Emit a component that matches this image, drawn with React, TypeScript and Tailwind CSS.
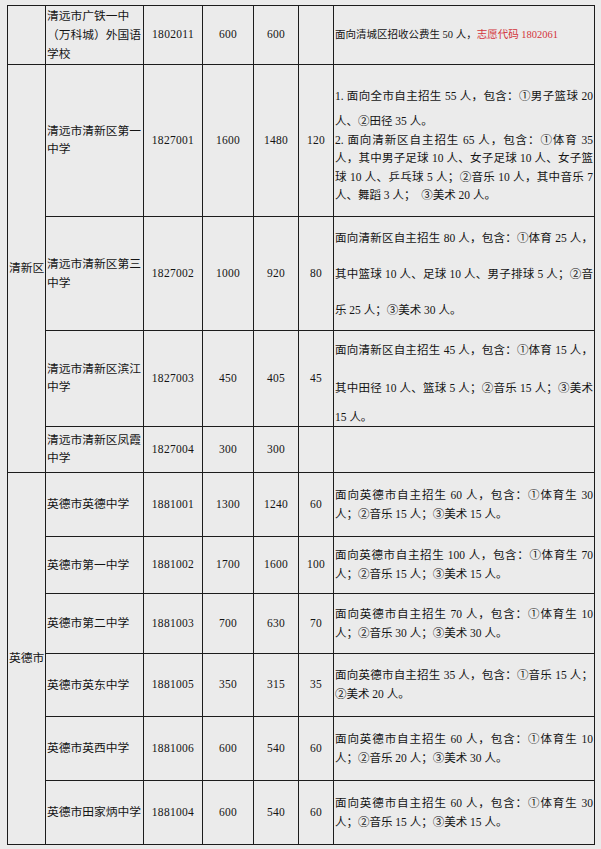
type Row = {
  h: string;
  region?: { label: string; span: number } | 'empty';
  name: string[];
  nameLeading: string;
  code: string;
  plan: string;
  quota: string;
  self: string;
  notes: React.ReactNode;
};

const J = 'text-justify [text-align-last:justify]';

function Two({ a, b }: { a: string; b: string }) {
  return (
    <div className="leading-[19px]">
      <div className={J}>{a}</div>
      <div>{b}</div>
    </div>
  );
}

const rows: Row[] = [
  {
    h: 'h-[59px]',
    region: 'empty',
    name: ['清远市广铁一中', '（万科城）外国语', '学校'],
    nameLeading: 'leading-[19px]',
    code: '1802011',
    plan: '600',
    quota: '600',
    self: '',
    notes: (
      <div className="text-[10.5px] leading-[18px] whitespace-nowrap">
        面向清城区招收公费生 50 人，<span className="text-[#d3343c]">志愿代码 1802061</span>
      </div>
    ),
  },
  {
    h: 'h-[152px]',
    region: { label: '清新区', span: 4 },
    name: ['清远市清新区第一', '中学'],
    nameLeading: 'leading-[18px]',
    code: '1827001',
    plan: '1600',
    quota: '1480',
    self: '120',
    notes: (
      <div className="pt-[16px]">
        <div className={`${J} leading-[31px]`}>1. 面向全市自主招生 55 人，包含：①男子篮球 20</div>
        <div className="leading-[18.5px]">人、②田径 35 人。</div>
        <div className={`${J} leading-[18.5px]`}>2. 面向清新区自主招生 65 人，包含：①体育 35</div>
        <div className={`${J} leading-[18.5px]`}>人，其中男子足球 10 人、女子足球 10 人、女子篮</div>
        <div className={`${J} leading-[18.5px]`}>球 10 人、乒乓球 5 人；②音乐 10 人，其中音乐 7</div>
        <div className="leading-[18.5px]">人、舞蹈 3 人；&nbsp;&nbsp;③美术 20 人。</div>
      </div>
    ),
  },
  {
    h: 'h-[114px]',
    name: ['清远市清新区第三', '中学'],
    nameLeading: 'leading-[19px]',
    code: '1827002',
    plan: '1000',
    quota: '920',
    self: '80',
    notes: (
      <div className="leading-[36px]">
        <div className={J}>面向清新区自主招生 80 人，包含：①体育 25 人，</div>
        <div className={J}>其中篮球 10 人、足球 10 人、男子排球 5 人；②音</div>
        <div>乐 25 人；③美术 30 人。</div>
      </div>
    ),
  },
  {
    h: 'h-[96px]',
    name: ['清远市清新区滨江', '中学'],
    nameLeading: 'leading-[18px]',
    code: '1827003',
    plan: '450',
    quota: '405',
    self: '45',
    notes: (
      <div>
        <div className={`${J} leading-[36px]`}>面向清新区自主招生 45 人，包含：①体育 15 人，</div>
        <div className={`${J} leading-[40px]`}>其中田径 10 人、篮球 5 人；②音乐 15 人；③美术</div>
        <div className="leading-[18px]">15 人。</div>
      </div>
    ),
  },
  {
    h: 'h-[46px]',
    name: ['清远市清新区凤霞', '中学'],
    nameLeading: 'leading-[18px]',
    code: '1827004',
    plan: '300',
    quota: '300',
    self: '',
    notes: null,
  },
  {
    h: 'h-[64px]',
    region: { label: '英德市', span: 6 },
    name: ['英德市英德中学'],
    nameLeading: 'leading-[19px]',
    code: '1881001',
    plan: '1300',
    quota: '1240',
    self: '60',
    notes: <Two a="面向英德市自主招生 60 人，包含：①体育生 30" b="人；②音乐 15 人；③美术 15 人。" />,
  },
  {
    h: 'h-[57px]',
    name: ['英德市第一中学'],
    nameLeading: 'leading-[19px]',
    code: '1881002',
    plan: '1700',
    quota: '1600',
    self: '100',
    notes: <Two a="面向英德市自主招生 100 人，包含：①体育生 70" b="人；②音乐 15 人；③美术 15 人。" />,
  },
  {
    h: 'h-[60px]',
    name: ['英德市第二中学'],
    nameLeading: 'leading-[19px]',
    code: '1881003',
    plan: '700',
    quota: '630',
    self: '70',
    notes: <Two a="面向英德市自主招生 70 人，包含：①体育生 10" b="人；②音乐 30 人；③美术 30 人。" />,
  },
  {
    h: 'h-[63px]',
    name: ['英德市英东中学'],
    nameLeading: 'leading-[19px]',
    code: '1881005',
    plan: '350',
    quota: '315',
    self: '35',
    notes: <Two a="面向英德市自主招生 35 人，包含：①音乐 15 人；" b="②美术 20 人。" />,
  },
  {
    h: 'h-[64px]',
    name: ['英德市英西中学'],
    nameLeading: 'leading-[19px]',
    code: '1881006',
    plan: '600',
    quota: '540',
    self: '60',
    notes: <Two a="面向英德市自主招生 60 人，包含：①体育生 10" b="人；②音乐 20 人；③美术 30 人。" />,
  },
  {
    h: 'h-[64px]',
    name: ['英德市田家炳中学'],
    nameLeading: 'leading-[19px]',
    code: '1881004',
    plan: '600',
    quota: '540',
    self: '60',
    notes: <Two a="面向英德市自主招生 60 人，包含：①体育生 30" b="人；②音乐 15 人；③美术 15 人。" />,
  },
];

const cell = 'border border-[#1c1c1c] p-0 align-middle';

export default function App() {
  return (
    <div className="w-[601px] h-[849px] bg-[#ebebeb] pt-[5px] pl-[7px] overflow-hidden font-['Liberation_Serif','Noto_Sans_CJK_SC',serif] text-[11.5px] text-[#141414]">
      <table className="table-fixed border-collapse w-[587px]">
        <colgroup>
          <col className="w-[38px]" />
          <col className="w-[98px]" />
          <col className="w-[59px]" />
          <col className="w-[51px]" />
          <col className="w-[45px]" />
          <col className="w-[35px]" />
          <col className="w-[261px]" />
        </colgroup>
        <tbody>
          {rows.map((r, i) => (
            <tr key={i} className={r.h}>
              {r.region === 'empty' && <td className={cell} />}
              {r.region && r.region !== 'empty' && (
                <td rowSpan={r.region.span} className={`${cell} pl-[1px] text-[11.75px]`}>
                  {r.region.label}
                </td>
              )}
              <td className={`${cell} pl-[1px] text-[11.75px] ${r.nameLeading}`}>
                {r.name.map((n, k) => (
                  <div key={k} className="whitespace-nowrap">{n}</div>
                ))}
              </td>
              <td className={`${cell} text-center tracking-[0.3px]`}>{r.code}</td>
              <td className={`${cell} text-center tracking-[0.3px]`}>{r.plan}</td>
              <td className={`${cell} text-center tracking-[0.3px]`}>{r.quota}</td>
              <td className={`${cell} text-center tracking-[0.3px]`}>{r.self}</td>
              <td className={`${cell} px-[1px] ${i === 1 ? 'align-top' : ''}`}>{r.notes}</td>
            </tr>
          ))}
        </tbody>
      </table>
    </div>
  );
}
